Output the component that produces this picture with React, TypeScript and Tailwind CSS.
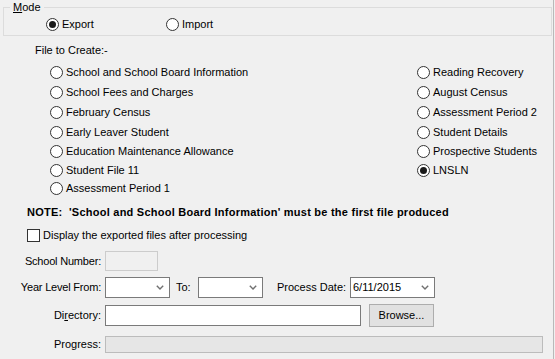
import React from "react";

const font = { fontFamily: '"Liberation Sans", Arial, sans-serif' };

function Radio({ checked = false }: { checked?: boolean }) {
  return (
    <span className="w-[13px] h-[13px] rounded-full border border-[#333333] bg-white flex items-center justify-center shrink-0">
      {checked && <span className="w-[7px] h-[7px] rounded-full bg-[#1a1a1a]" />}
    </span>
  );
}

function RadioItem({ label, checked = false, h = "h-[20px]" }: { label: string; checked?: boolean; h?: string }) {
  return (
    <div className={`flex items-center gap-[3px] ${h}`}>
      <Radio checked={checked} />
      <span className="leading-[13px] whitespace-nowrap">{label}</span>
    </div>
  );
}

function Chevron() {
  return (
    <svg width="8" height="5" viewBox="0 0 8 5" className="shrink-0">
      <path d="M0.8 0.8 L4 4 L7.2 0.8" fill="none" stroke="#707070" strokeWidth="1.4" />
    </svg>
  );
}

function Select({ w, value = "" }: { w: string; value?: string }) {
  return (
    <div className={`${w} h-[21px] border border-[#7a7a7a] bg-white flex items-center justify-between pl-[2px] pr-[5px]`}>
      <span className="leading-[13px]">{value}</span>
      <Chevron />
    </div>
  );
}

const leftItems = [
  "School and School Board Information",
  "School Fees and Charges",
  "February Census",
  "Early Leaver Student",
  "Education Maintenance Allowance",
  "Student File 11",
  "Assessment Period 1",
];
const rightItems = [
  "Reading Recovery",
  "August Census",
  "Assessment Period 2",
  "Student Details",
  "Prospective Students",
  "LNSLN",
];
const heights = ["h-[20px]", "h-[20px]", "h-[20px]", "h-[20px]", "h-[19px]", "h-[19px]", "h-[17px]"];

export default function App() {
  return (
    <div className="w-[555px] h-[359px] bg-[#f0f0f0] overflow-hidden text-[11px] text-black" style={font}>
      <div className="w-[554px] h-[359px] border-r border-[#b9b9b9] pt-[1px] flex flex-col">
        <fieldset className="ml-[3px] w-[549px] h-[35px] border border-[#dcdcdc] min-w-0">
          <legend className="ml-[6px] px-[3px] leading-[13px]">
            <u>M</u>ode
          </legend>
          <div className="h-[18px] mt-[1px] flex items-center pl-[42px]">
            <div className="flex items-center gap-[3px] w-[120px]">
              <Radio checked />
              <span className="leading-[13px]">Export</span>
            </div>
            <div className="flex items-center gap-[3px]">
              <Radio />
              <span className="leading-[13px]">Import</span>
            </div>
          </div>
        </fieldset>

        <div className="mt-[8px] pl-[35px] leading-[13px]">File to Create:-</div>

        <div className="mt-[5px] flex">
          <div className="pl-[50px] w-[417px] flex flex-col">
            {leftItems.map((t, i) => (
              <RadioItem key={t} label={t} h={heights[i]} />
            ))}
          </div>
          <div className="flex flex-col">
            {rightItems.map((t, i) => (
              <RadioItem key={t} label={t} h={heights[i]} checked={t === "LNSLN"} />
            ))}
          </div>
        </div>

        <div className="mt-[9px] pl-[27px] leading-[13px] font-bold tracking-[0.24px] whitespace-nowrap">
          NOTE:&nbsp; 'School and School Board Information' must be the first file produced
        </div>

        <div className="mt-[9px] pl-[27px] h-[14px] flex items-center gap-[3px]">
          <span className="w-[13px] h-[13px] border border-[#333333] bg-white shrink-0" />
          <span className="leading-[13px]">Display the exported files after processing</span>
        </div>

        <div className="mt-[9px] flex items-center h-[20px]">
          <div className="w-[101px] text-right leading-[13px] tracking-[-0.2px]">School Number:</div>
          <div className="ml-[4px] w-[53px] h-[20px] border border-[#cccccc] bg-[#f0f0f0]" />
        </div>

        <div className="mt-[6px] flex items-center h-[21px]">
          <div className="w-[101px] text-right leading-[13px] tracking-[-0.2px]">Year Level From:</div>
          <div className="ml-[4px]">
            <Select w="w-[65px]" />
          </div>
          <div className="ml-[6px] w-[22px] leading-[13px]">To:</div>
          <Select w="w-[65px]" />
          <div className="ml-[14px] w-[73px] leading-[13px]">Process Date:</div>
          <Select w="w-[85px]" value="6/11/2015" />
        </div>

        <div className="mt-[6px] flex items-center h-[23px]">
          <div className="w-[101px] text-right leading-[13px]">
            Di<u>r</u>ectory:
          </div>
          <div className="ml-[4px] w-[256px] h-[21px] border border-[#7a7a7a] bg-white" />
          <div className="ml-[8px] w-[65px] h-[23px] border border-[#adadad] bg-[#e1e1e1] flex items-center justify-center leading-[13px]">
            Browse...
          </div>
        </div>

        <div className="mt-[9px] flex items-center h-[17px]">
          <div className="w-[101px] text-right leading-[13px]">Progress:</div>
          <div className="ml-[4px] w-[438px] h-[17px] border border-[#bcbcbc] bg-[#e6e6e6]" />
        </div>
      </div>
    </div>
  );
}
